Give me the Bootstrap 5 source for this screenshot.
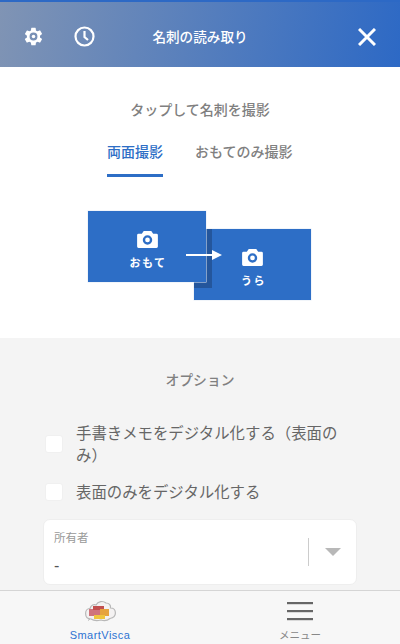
<!DOCTYPE html>
<html lang="ja">
<head>
<meta charset="utf-8">
<meta name="viewport" content="width=device-width, initial-scale=1">
<link href="https://cdn.jsdelivr.net/npm/bootstrap@5.3.0/dist/css/bootstrap.min.css" rel="stylesheet">
<style>
html,body{height:100%;overflow:hidden}
body{font-family:"Liberation Sans","Noto Sans CJK JP",sans-serif;background:#fff;color:#666}
.shell{width:400px;height:644px;overflow:hidden}
.topbar{position:relative;height:67px;flex:none;background:linear-gradient(100deg,#8094b4 0%,#2d69c5 100%);border-top:2px solid #2d69c5;color:#fff;padding:4px 24px 0 23px}
.topbar h1{font-size:13.600px;font-weight:500;margin:0;position:absolute;left:0;right:0;top:29px;text-align:center;line-height:14px}
.gap-icons{gap:30px}
.closer{margin-top:1px}
.shoot{height:271px;flex:none;padding-top:33px}
.shoot-title{font-size:14px;font-weight:500;color:#808080;line-height:20px;margin:0}
.tabs-row{margin-top:22px;gap:32px;padding-left:107px}
.tab-item{font-size:14px;font-weight:500;color:#808080;line-height:20px;padding-bottom:12px;border-bottom:3px solid transparent}
.tab-item.on{color:#2d6ec6;border-bottom-color:#2d6ec6}
.stage{position:relative;margin:34px 0 0 88px;height:89px;width:223px}
.side{width:118px;height:71px;padding-top:7px;background:#2d6ec6;color:#fff;font-size:11px;font-weight:700;letter-spacing:1.500px;line-height:14px;box-shadow:0 0 0 .5px #e4ebf6}
.side span{padding-left:2px}
.side-front{position:relative;z-index:2}
.side-back{position:absolute;left:106px;top:18px;width:117px;overflow:hidden;z-index:1}
.side-back::before{content:"";position:absolute;left:0;top:0;width:18px;height:59px;background:#24569c}
.side-back>*{position:relative}
.side svg{margin-bottom:8px}
.hand{position:absolute;left:98px;top:38px;z-index:3}
.opts{flex:1;min-height:0;background:#f4f4f4;padding:33px 45px 0 45px}
.opts-title{font-size:13.800px;font-weight:500;color:#808080;line-height:20px;margin:0 0 32px}
.check-row{gap:13px;margin-bottom:15px}
.tick{width:18px;height:18px;flex:none;margin-bottom:3px;background:#fff;border-radius:3px;border:1px solid #f0f0f0}
.check-row p{font-size:15.400px;line-height:22px;margin:0;color:#666;width:280px}
.owner{height:66px;margin:0 -2px 0 -2px;background:#fff;border-radius:7px;border:1px solid #eee;padding:10px 0 0 10px;position:relative}
.owner small{display:block;font-size:11.500px;color:#999;line-height:16px}
.owner b{display:block;font-weight:400;font-size:16px;color:#555;line-height:22px;margin-top:9px}
.owner i{position:absolute;left:264px;top:18px;width:1px;height:28px;background:#ccc}
.owner u{position:absolute;left:281px;top:28px;border:8px solid transparent;border-top:8px solid #b8b8b8;border-bottom:0}
.foot{height:54px;flex:none;background:#f7f7f7;border-top:1px solid #d5d5d5}
.foot-item{width:200px;padding-top:7px;font-size:10.500px;line-height:12px;color:#888}
.foot-item.on{color:#2d73d2;font-size:11px;letter-spacing:.45px}
.foot-item svg{height:28px;margin-bottom:3px}
</style>
</head>
<body>
<div class="shell d-flex flex-column">
  <header class="topbar d-flex align-items-center justify-content-between">
    <h1>名刺の読み取り</h1>
    <div class="d-flex align-items-center gap-icons">
      <svg width="21" height="21" viewBox="0 0 24 24" fill="#fff" aria-label="設定"><path fill-rule="evenodd" d="M19.400 13c.04-.33.07-.66.07-1s-.03-.67-.07-1l2.100-1.650a.5.5 0 0 0 .12-.64l-2-3.460a.5.5 0 0 0-.6-.22l-2.500 1a7.300 7.300 0 0 0-1.700-1l-.37-2.640A.5.5 0 0 0 13.950 2h-4a.5.5 0 0 0-.5.42l-.38 2.650c-.6.25-1.170.6-1.690 1l-2.490-1a.5.5 0 0 0-.61.22l-2 3.460a.5.5 0 0 0 .12.64L4.500 11a8 8 0 0 0 0 2l-2.110 1.650a.5.5 0 0 0-.12.64l2 3.460c.12.22.38.3.6.22l2.500-1c.52.4 1.080.74 1.690 1l.38 2.650c.04.23.25.42.5.42h4a.5.5 0 0 0 .5-.42l.37-2.650c.61-.26 1.180-.6 1.700-1l2.490 1c.23.08.49 0 .6-.22l2-3.460a.5.5 0 0 0-.12-.64zM12 16.500a4.500 4.500 0 1 1 0-9 4.500 4.500 0 0 1 0 9z"/><circle cx="12" cy="12" r="2" fill="#fff"/></svg>
      <svg width="21" height="21" viewBox="0 0 21 21" fill="none" stroke="#fff" aria-label="履歴"><circle cx="10.500" cy="10.500" r="9" stroke-width="2.200"/><path d="M10.500 5v6l3.500 3" stroke-width="2.200"/></svg>
    </div>
    <svg class="closer" width="18" height="18" viewBox="0 0 18 18" stroke="#fff" stroke-width="3" aria-label="閉じる"><path d="M1 1l16 16M17 1L1 17"/></svg>
  </header>
  <section class="shoot">
    <p class="shoot-title text-center">タップして名刺を撮影</p>
    <div class="tabs-row d-flex">
      <div class="tab-item on">両面撮影</div>
      <div class="tab-item">おもてのみ撮影</div>
    </div>
    <div class="stage">
      <div class="side side-front d-flex flex-column align-items-center justify-content-center">
        <svg width="21" height="17" viewBox="0 0 22 18"><path fill="#fff" fill-rule="evenodd" d="M7 0h8l2 3h3.500a1.500 1.500 0 0 1 1.500 1.500V16.500A1.500 1.500 0 0 1 20.500 18H1.500A1.500 1.500 0 0 1 0 16.500V4.500A1.500 1.500 0 0 1 1.500 3H5zM11 4.500a5 5 0 1 0 0 10 5 5 0 0 0 0-10zM11 7a2.500 2.500 0 1 1 0 5 2.500 2.500 0 0 1 0-5z"/></svg>
        <span>おもて</span>
      </div>
      <div class="side side-back d-flex flex-column align-items-center justify-content-center">
        <svg width="21" height="17" viewBox="0 0 22 18"><path fill="#fff" fill-rule="evenodd" d="M7 0h8l2 3h3.500a1.500 1.500 0 0 1 1.500 1.500V16.500A1.500 1.500 0 0 1 20.500 18H1.500A1.500 1.500 0 0 1 0 16.500V4.500A1.500 1.500 0 0 1 1.500 3H5zM11 4.500a5 5 0 1 0 0 10 5 5 0 0 0 0-10zM11 7a2.500 2.500 0 1 1 0 5 2.500 2.500 0 0 1 0-5z"/></svg>
        <span>うら</span>
      </div>
      <svg class="hand" width="36" height="12" viewBox="0 0 36 12"><path d="M0 6h27" stroke="#fff" stroke-width="2"/><path d="M26 1l10 5-10 5z" fill="#fff"/></svg>
    </div>
  </section>
  <section class="opts">
    <p class="opts-title text-center">オプション</p>
    <div class="check-row d-flex align-items-center"><span class="tick"></span><p>手書きメモをデジタル化する（表面のみ）</p></div>
    <div class="check-row d-flex align-items-center"><span class="tick"></span><p>表面のみをデジタル化する</p></div>
    <div class="owner">
      <small>所有者</small><b>-</b><i></i><u></u>
    </div>
  </section>
  <nav class="foot d-flex">
    <div class="foot-item on d-flex flex-column align-items-center">
      <svg width="31" height="28" viewBox="0 -2 31 28"><path d="M6 19C2 19 .6 16 .6 13.500.6 10 3 8.500 5 8.500 6 5 9 4 11 5 13 1 18 .6 21 3c3 0 5 2 4.500 5 3 0 4.900 2 4.900 5s-2.400 5-5.400 5.500c-3 2.500-6 2.500-9 1.500-4 1-7 1-10-1z" fill="#f4f2f2" stroke="#b8b8b8" stroke-width="1.200"/><path d="M3 20.500l2-1.500" stroke="#b8b8b8" stroke-width="1"/><rect x="4" y="9" width="11" height="7" fill="#d0747c"/><rect x="8" y="6" width="11" height="4" fill="#c24f4f"/><rect x="15" y="9" width="9" height="7" fill="#e6a33e"/><rect x="9" y="15" width="11" height="4" fill="#efc53e"/></svg>
      <span>SmartVisca</span>
    </div>
    <div class="foot-item d-flex flex-column align-items-center">
      <svg width="28" height="28" viewBox="0 0 28 28" fill="#666"><rect x="1" y="4" width="26" height="2.200"/><rect x="1" y="12" width="26" height="2.200"/><rect x="1" y="20" width="26" height="2.200"/></svg>
      <span>メニュー</span>
    </div>
  </nav>
</div>
</body>
</html>
